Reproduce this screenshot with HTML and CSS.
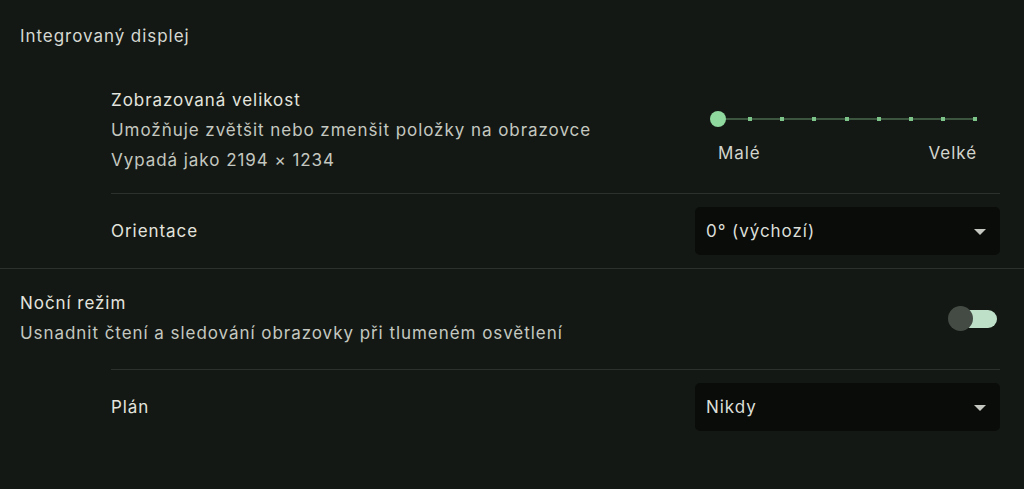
FILE: index.html
```html
<!DOCTYPE html>
<html lang="cs">
<head>
  <meta charset="UTF-8" />
  <meta name="viewport" content="width=device-width, initial-scale=1.0" />
  <title>Displej</title>
  <link rel="stylesheet" href="styles.css">
</head>
<body>
  <section class="section">
    <h2 class="section-title">Integrovaný displej</h2>

    <div class="sub">
      <div class="row row-size">
        <div class="label">
          <div class="title">Zobrazovaná velikost</div>
          <div class="desc">Umožňuje zvětšit nebo zmenšit položky na obrazovce</div>
          <div class="desc">Vypadá jako 2194 × 1234</div>
        </div>
        <div class="slider">
          <div class="track">
            <span class="knob"></span>
            <span class="tick"></span><span class="tick"></span><span class="tick"></span><span class="tick"></span>
            <span class="tick"></span><span class="tick"></span><span class="tick"></span><span class="tick"></span>
          </div>
          <div class="slider-labels">
            <span>Malé</span>
            <span>Velké</span>
          </div>
        </div>
      </div>

      <div class="row row-select">
        <div class="title">Orientace</div>
        <div class="select">
          <span>0° (výchozí)</span>
          <span class="caret"></span>
        </div>
      </div>
    </div>
  </section>

  <section class="section night">
    <div class="row row-toggle">
      <div class="label">
        <div class="title">Noční režim</div>
        <div class="desc">Usnadnit čtení a sledování obrazovky při tlumeném osvětlení</div>
      </div>
      <div class="toggle">
        <span class="toggle-track"></span>
        <span class="toggle-knob"></span>
      </div>
    </div>

    <div class="sub">
      <div class="row row-select row-plan">
        <div class="title">Plán</div>
        <div class="select">
          <span>Nikdy</span>
          <span class="caret"></span>
        </div>
      </div>
    </div>
  </section>
</body>
</html>
```

FILE: styles.css
```css
body {
  margin: 0;
  background: #141814;
  color: #e2e3de;
  font-family: Inter, Roboto, sans-serif;
  font-size: 17px;
  letter-spacing: 0.95px;
  overflow: hidden;
}

.section-title {
  margin: 0;
  padding: 24px 20px 0;
  font-size: 17px;
  font-weight: 400;
  line-height: 24px;
  color: #d6d9d2;
}

.sub {
  margin-left: 111px;
  margin-right: 24px;
}

.row {
  display: flex;
  align-items: center;
  justify-content: space-between;
}

.title {
  line-height: 30px;
  color: #e3e4de;
}

.desc {
  line-height: 30px;
  color: #c4c8c0;
}

.row-size {
  align-items: flex-start;
  padding: 37px 0 18px;
  border-bottom: 1px solid #2c312c;
}

/* slider */
.slider {
  width: 261px;
  margin-right: 23px;
  padding-top: 33px;
}

.track {
  position: relative;
  height: 2px;
  background: #3b553e;
  display: flex;
  justify-content: space-between;
  align-items: center;
}

.tick {
  width: 4px;
  height: 4px;
  background: #7cc48a;
}

.knob {
  width: 4px;
  height: 4px;
  position: relative;
}

.knob::after {
  content: "";
  position: absolute;
  left: -6px;
  top: -6px;
  width: 16px;
  height: 16px;
  border-radius: 50%;
  background: #8fd89e;
}

.slider-labels {
  display: flex;
  justify-content: space-between;
  margin: 21px 0 0 2px;
  line-height: 24px;
  color: #d2d5ce;
}

/* select */
.row-select {
  height: 74px;
}

.select {
  width: 305px;
  height: 48px;
  box-sizing: border-box;
  padding: 0 14px 0 11px;
  background: #0a0c0a;
  border-radius: 5px;
  display: flex;
  align-items: center;
  justify-content: space-between;
  color: #dcdfd8;
}

.caret {
  width: 0;
  height: 0;
  border-left: 6px solid transparent;
  border-right: 6px solid transparent;
  border-top: 6px solid #c4c8c0;
  margin-top: 1px;
}

/* night light */
.night {
  border-top: 1px solid #2c312c;
}

.row-toggle {
  padding: 19px 27px 21px 20px;
}

.row-plan {
  border-top: 1px solid #2c312c;
}

.toggle {
  position: relative;
  width: 49px;
  height: 25px;
}

.toggle-track {
  position: absolute;
  right: 0;
  top: 4px;
  width: 46px;
  height: 18px;
  border-radius: 9px;
  background: #bfe0c8;
}

.toggle-knob {
  position: absolute;
  left: 0;
  top: 0;
  width: 25px;
  height: 25px;
  border-radius: 50%;
  background: #444b45;
}
```
